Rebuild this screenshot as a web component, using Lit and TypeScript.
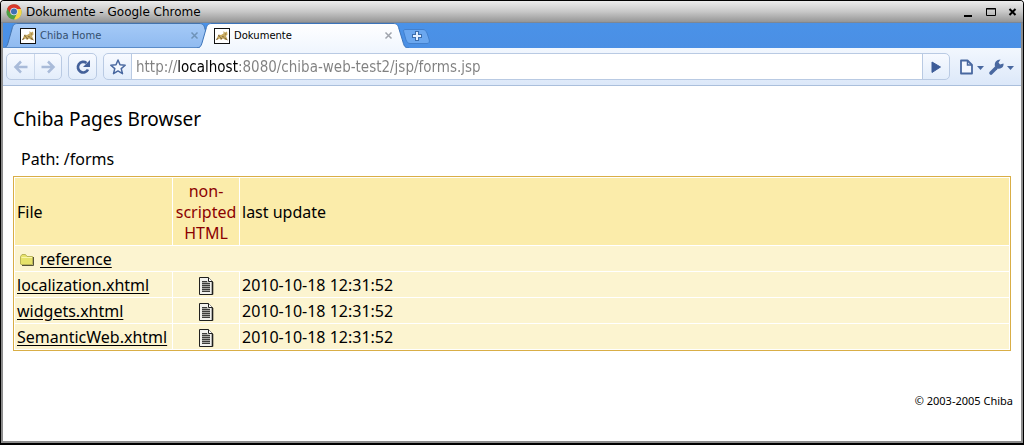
import { LitElement, html, css, svg } from "lit";
import { customElement, property } from "lit/decorators.js";

const chromeLogo = html`<svg class="logo" width="16" height="16" viewBox="0 0 16 16" aria-hidden="true">
  <circle cx="8" cy="8" r="7.6" fill="#4f9f45" />
  <path d="M1.200 4.500A7.600 7.600 0 0 1 15 5L8 5 4.600 9.500Z" fill="#d8382c" />
  <path d="M15 5A7.600 7.600 0 0 1 8 15.600L11 9.500 9 5Z" fill="#f8d648" />
  <circle cx="8" cy="7.500" r="3.800" fill="#dfe8f1" />
  <circle cx="8" cy="7.500" r="3" fill="#3f70b2" />
</svg>`;

const catIcon = html`<svg width="16" height="16" viewBox="0 0 16 16" aria-hidden="true">
  <rect x=".5" y=".5" width="15" height="15" fill="#fff" stroke="#111" />
  <path d="M3 10L4.500 6.500 7 7 9.500 5.500 9.500 3 11 4.500 13 3.500 13.500 6.500 12 8 13.500 11.500 11.500 12 9 10.500 7 12 5.500 10.500 3 12Z" fill="#c8aa60" />
  <path d="M2 11.500L4 10.500M6 9.500L8 11M10.500 10L13.500 12M4 7.500L6 8.500" fill="none" stroke="#765f3d" />
  <path d="M8 8.500L10 9M11 6H12" stroke="#8a713f" />
</svg>`;

const folderIcon = html`<svg width="16" height="14" viewBox="0 0 16 14" aria-hidden="true">
  <path d="M1.500 11V3.500L3 1.500H6.500L8 3.500H13.500V11.500H2Z" fill="#e6e26a" stroke="#b9b458" />
  <path d="M2.500 4.500H13" stroke="#faf6a8" />
  <path d="M14.500 4V12.500H3" fill="none" stroke="#55533a" />
</svg>`;

const documentIcon = html`<svg width="16" height="18" viewBox="0 0 16 18" aria-hidden="true">
  <path d="M1.500 .5H10.500L14.500 4.500V17.500H1.500Z" fill="#f2f2ee" stroke="#20201e" />
  <path d="M10.500 .5V4.500H14.500" fill="#fff" stroke="#20201e" />
  <path d="M14.500 5V17.500" stroke="#20201e" stroke-width="1.600" />
  <path d="M4 4H9.500V5.500H12V15H4Z" fill="#a4a4a0" />
  <path d="M4 4.500H9M4 6.500H12M4 8.500H12M4 10.500H12M4 12.500H12M4 14.500H12" stroke="#3c3c3a" />
</svg>`;

@customElement("browser-tab")
class BrowserTab extends LitElement {
  @property() label = "";
  @property({ type: Boolean, reflect: true }) active = false;

  static styles = css`
    :host { display: block; position: relative; flex: 0 1 212px; min-width: 90px; height: 25px; }
    :host([active]) { z-index: 1; }
    .shape { position: absolute; inset: 0; width: 100%; height: 100%; }
    .row { position: relative; display: flex; align-items: center; height: 25px; padding: 0 16px 0 17px; }
    button { border: 0; padding: 0; background: none; font: inherit; color: inherit; }
    .name { flex: 1; min-width: 0; display: flex; align-items: center; gap: 4px; overflow: hidden; white-space: nowrap;
      font: 10px/14px "DejaVu Sans", sans-serif; color: #34506f; }
    :host([active]) .name { color: #000; }
    .close { display: flex; color: #6f93b8; }
    :host([active]) .close { color: #a0a4ac; }
  `;

  render() {
    const edge = this.active ? "#3c74ba" : "#4474ae";
    return html`
      <svg class="shape" viewBox="0 0 212 25" preserveAspectRatio="none" aria-hidden="true">
        <defs><linearGradient id="g" x2="0" y2="1">
          <stop offset="0" stop-color=${this.active ? "#ffffff" : "#a5caf7"} />
          <stop offset="1" stop-color=${this.active ? "#f2f7fe" : "#8fbaf0"} />
        </linearGradient></defs>
        <path d="M0 25C3 25 4 23 5 20L9 6C10 2 11 .5 15 .5H196C200 .5 201 2 202 6L206 19C207 23 208 25 212 25Z" fill="url(#g)" />
        <path d="M0 25C3 25 4 23 5 20L9 6C10 2 11 .5 15 .5H196C200 .5 201 2 202 6L206 19C207 23 208 25 212 25" fill="none" stroke=${edge} />
        ${this.active ? null : svg`<path d="M0 24.500H212" stroke="#5a8cc9" />`}
      </svg>
      <div class="row">
        <button class="name" role="tab" aria-selected=${this.active}>${catIcon}<span>${this.label}</span></button>
        <button class="close" aria-label="Close tab"><svg width="9" height="9" viewBox="0 0 9 9">
          <path d="M1.500 1.500L7.500 7.500M7.500 1.500L1.500 7.500" stroke="currentColor" stroke-width="1.500" /></svg></button>
      </div>`;
  }
}

@customElement("browser-toolbar")
class BrowserToolbar extends LitElement {
  static styles = css`
    :host { display: flex; align-items: center; height: 38px; box-sizing: border-box; padding: 0 4px 0 3px;
      background: linear-gradient(#f2f7fe, #dce8f9); border-bottom: 1px solid #aabfdc; }
    button { border: 0; padding: 0; background: none; display: flex; align-items: center; justify-content: center; }
    .group { display: flex; box-sizing: border-box; height: 27px; border: 1px solid #b9cae3; border-radius: 5px;
      background: linear-gradient(#f7faff, #e3edfb); overflow: hidden; }
    .group button { width: 27px; }
    .group button + button { border-left: 1px solid #cbd8eb; }
    .reload { margin-left: 6px; }
    .location { flex: 1; min-width: 0; margin: 0 7px 0 6px; }
    .location .go { border-left: 1px solid #b9cae3; }
    .field { flex: 1; min-width: 0; display: flex; background: #fff; border-left: 1px solid #b9cae3; padding-left: 4px; }
    input { flex: 1; min-width: 0; border: 0; padding: 0; outline: 0; font: 15px/24px "DejaVu Sans Condensed", "DejaVu Sans", sans-serif; font-stretch: condensed;
      background: linear-gradient(90deg, #808080 42px, #000 42px 103px, #808080 103px);
      background-clip: text; -webkit-background-clip: text; -webkit-text-fill-color: transparent; }
    .menu { width: 30px; }
  `;

  render() {
    const caret = svg`<path d="M19 8H26L22.500 12Z" fill="#4968a0" />`;
    return html`
      <div class="group">
        <button aria-label="Back"><svg width="16" height="14" viewBox="0 0 16 14"><path d="M14.500 7H3M8 1.500L2.500 7 8 12.500" fill="none" stroke="#a9bbd9" stroke-width="2.500" /></svg></button>
        <button aria-label="Forward"><svg width="16" height="14" viewBox="0 0 16 14"><path d="M1.500 7H13M8 1.500L13.500 7 8 12.500" fill="none" stroke="#a9bbd9" stroke-width="2.500" /></svg></button>
      </div>
      <div class="group reload">
        <button aria-label="Reload"><svg width="16" height="16" viewBox="0 0 16 16"><path d="M11.500 4A5.300 5.300 0 1 0 13 10.500" fill="none" stroke="#44619a" stroke-width="2.700" /><path d="M15 1V8H8Z" fill="#44619a" /></svg></button>
      </div>
      <div class="group location">
        <button aria-label="Bookmark this page"><svg width="18" height="18" viewBox="0 0 18 18"><path d="M9 2L11 6.800 16.200 7.200 12.200 10.600 13.500 15.700 9 12.900 4.500 15.700 5.800 10.600 1.800 7.200 7 6.800Z" fill="#f5f9ff" stroke="#4968a0" stroke-width="1.500" stroke-linejoin="round" /></svg></button>
        <div class="field"><input type="text" aria-label="Address" spellcheck="false" .value=${"http://localhost:8080/chiba-web-test2/jsp/forms.jsp"} /></div>
        <button class="go" aria-label="Go"><svg width="10" height="12" viewBox="0 0 10 12"><path d="M1 1L9.500 6 1 11.500Z" fill="#3d5c98" stroke="#3d5c98" stroke-linejoin="round" /></svg></button>
      </div>
      <button class="menu" aria-label="Page menu"><svg width="28" height="18" viewBox="0 0 28 18"><path d="M3 2.500H9.500L14 7V15.500H3Z" fill="#f4f8ff" stroke="#4968a0" stroke-width="1.800" stroke-linejoin="round" /><path d="M9.500 2.500V7H14" fill="none" stroke="#4968a0" stroke-width="1.500" />${caret}</svg></button>
      <button class="menu" aria-label="Settings menu"><svg width="28" height="18" viewBox="0 0 28 18"><path d="M3 15L8 10" stroke="#4968a0" stroke-width="3.600" stroke-linecap="round" /><path d="M12.500 1.500L10.500 4.500 12 6.500 15.500 5.500C16 9 13 11.500 9.500 10.500L7 8.500C6 4.500 8.500 1.500 12.500 1.500Z" fill="#4968a0" />${caret}</svg></button>`;
  }
}

@customElement("pages-browser")
class PagesBrowser extends LitElement {
  private files = ["localization.xhtml", "widgets.xhtml", "SemanticWeb.xhtml"];

  static styles = css`
    :host { display: block; padding: 20px 10px 32px; background: #fff; color: #000; font: 16px/21px "Noto Sans", sans-serif; }
    h1 { margin: 0; font-size: 19px; line-height: 27px; font-weight: 400; }
    .path { margin: 16px 8px 6px; }
    table { width: 100%; border: 1px solid #d9ae46; border-spacing: 1px; background: #fff; }
    th, td { padding: 3px 2px 1px; background: #fcf4d0; text-align: left; font-weight: 400; height: 21px; }
    th { background: #fbecaa; }
    .file { width: 153px; }
    .plain { width: 62px; text-align: center; color: #8b0000; }
    a { color: #000; text-underline-offset: 2px; }
    .doc { display: flex; justify-content: center; }
    .folder { display: flex; align-items: center; gap: 5px; padding-left: 2px; }
    footer { margin: 42px -2px 0 0; text-align: right; font-size: 11px; line-height: 16px; }
  `;

  render() {
    return html`
      <h1>Chiba Pages Browser</h1>
      <div class="path">Path: /forms</div>
      <table>
        <thead><tr><th class="file">File</th><th class="plain">non-scripted HTML</th><th>last update</th></tr></thead>
        <tbody>
          <tr><td colspan="3"><div class="folder">${folderIcon}<a href="#reference">reference</a></div></td></tr>
          ${this.files.map((name) => html`<tr>
            <td><a href="#${name}">${name}</a></td>
            <td><a class="doc" href="#plain-${name}" aria-label="Non-scripted ${name}">${documentIcon}</a></td>
            <td>2010-10-18 12:31:52</td>
          </tr>`)}
        </tbody>
      </table>
      <footer>© 2003-2005 Chiba</footer>`;
  }
}

@customElement("app-root")
class AppRoot extends LitElement {
  static styles = css`
    :host { display: flex; flex-direction: column; min-height: 100vh; box-sizing: border-box; background: #fff;
      border: 1px solid #000; border-bottom-width: 2px; border-radius: 4px 4px 0 0; overflow: hidden; }
    .frame { flex: 1; border: 2px solid #8c8c8c; border-top: 0; }
    .title { display: flex; align-items: center; height: 21px; padding: 0 4px 0 5px; border-bottom: 1px solid #7d8794;
      background: linear-gradient(#ececec, #c8c8c8 50%, #969696); font: 12px/20px "DejaVu Sans", sans-serif; }
    .title span { flex: 1; margin-left: 4px; }
    button { border: 0; padding: 0; background: none; display: flex; }
    .controls { display: flex; gap: 10px; }
    .tabs { display: flex; height: 25px; background: linear-gradient(#4a92e8, #4b8fe4); }
    .tabs browser-tab + browser-tab { margin-left: -18px; }
    .new { margin: 5px 0 0 -6px; }
  `;

  render() {
    return html`
      <div class="title">
        ${chromeLogo}<span>Dokumente - Google Chrome</span>
        <div class="controls">
          <button aria-label="Minimize"><svg width="12" height="12"><path d="M1 10H9" stroke="#000" stroke-width="2" /></svg></button>
          <button aria-label="Maximize"><svg width="12" height="12"><path d="M1.500 2.500H10.500V9.500H1.500ZM1 3H11" fill="none" stroke="#000" /></svg></button>
          <button aria-label="Close"><svg width="12" height="12"><path d="M2.500 3L8.500 9M8.500 3L2.500 9" stroke="#000" stroke-width="2" /></svg></button>
        </div>
      </div>
      <div class="frame">
        <div class="tabs" role="tablist">
          <browser-tab label="Chiba Home"></browser-tab>
          <browser-tab label="Dokumente" active></browser-tab>
          <button class="new" aria-label="New tab"><svg width="28" height="17" viewBox="0 0 28 17">
            <path d="M2 1.500H20C22 1.500 23 3 24 5L26 11C27 14 26 15.500 24 15.500H7C5 15.500 4 14 3 12L1 5C0 2 1 1.500 2 1.500Z" fill="#6ba7ef" stroke="#4380cd" />
            <path d="M14 3V13M9 8H19" stroke="#3c6dac" stroke-width="4" /><path d="M14 4V12M10 8H18" stroke="#e4f0ff" stroke-width="2" />
          </svg></button>
        </div>
        <browser-toolbar></browser-toolbar>
        <pages-browser></pages-browser>
      </div>`;
  }
}
